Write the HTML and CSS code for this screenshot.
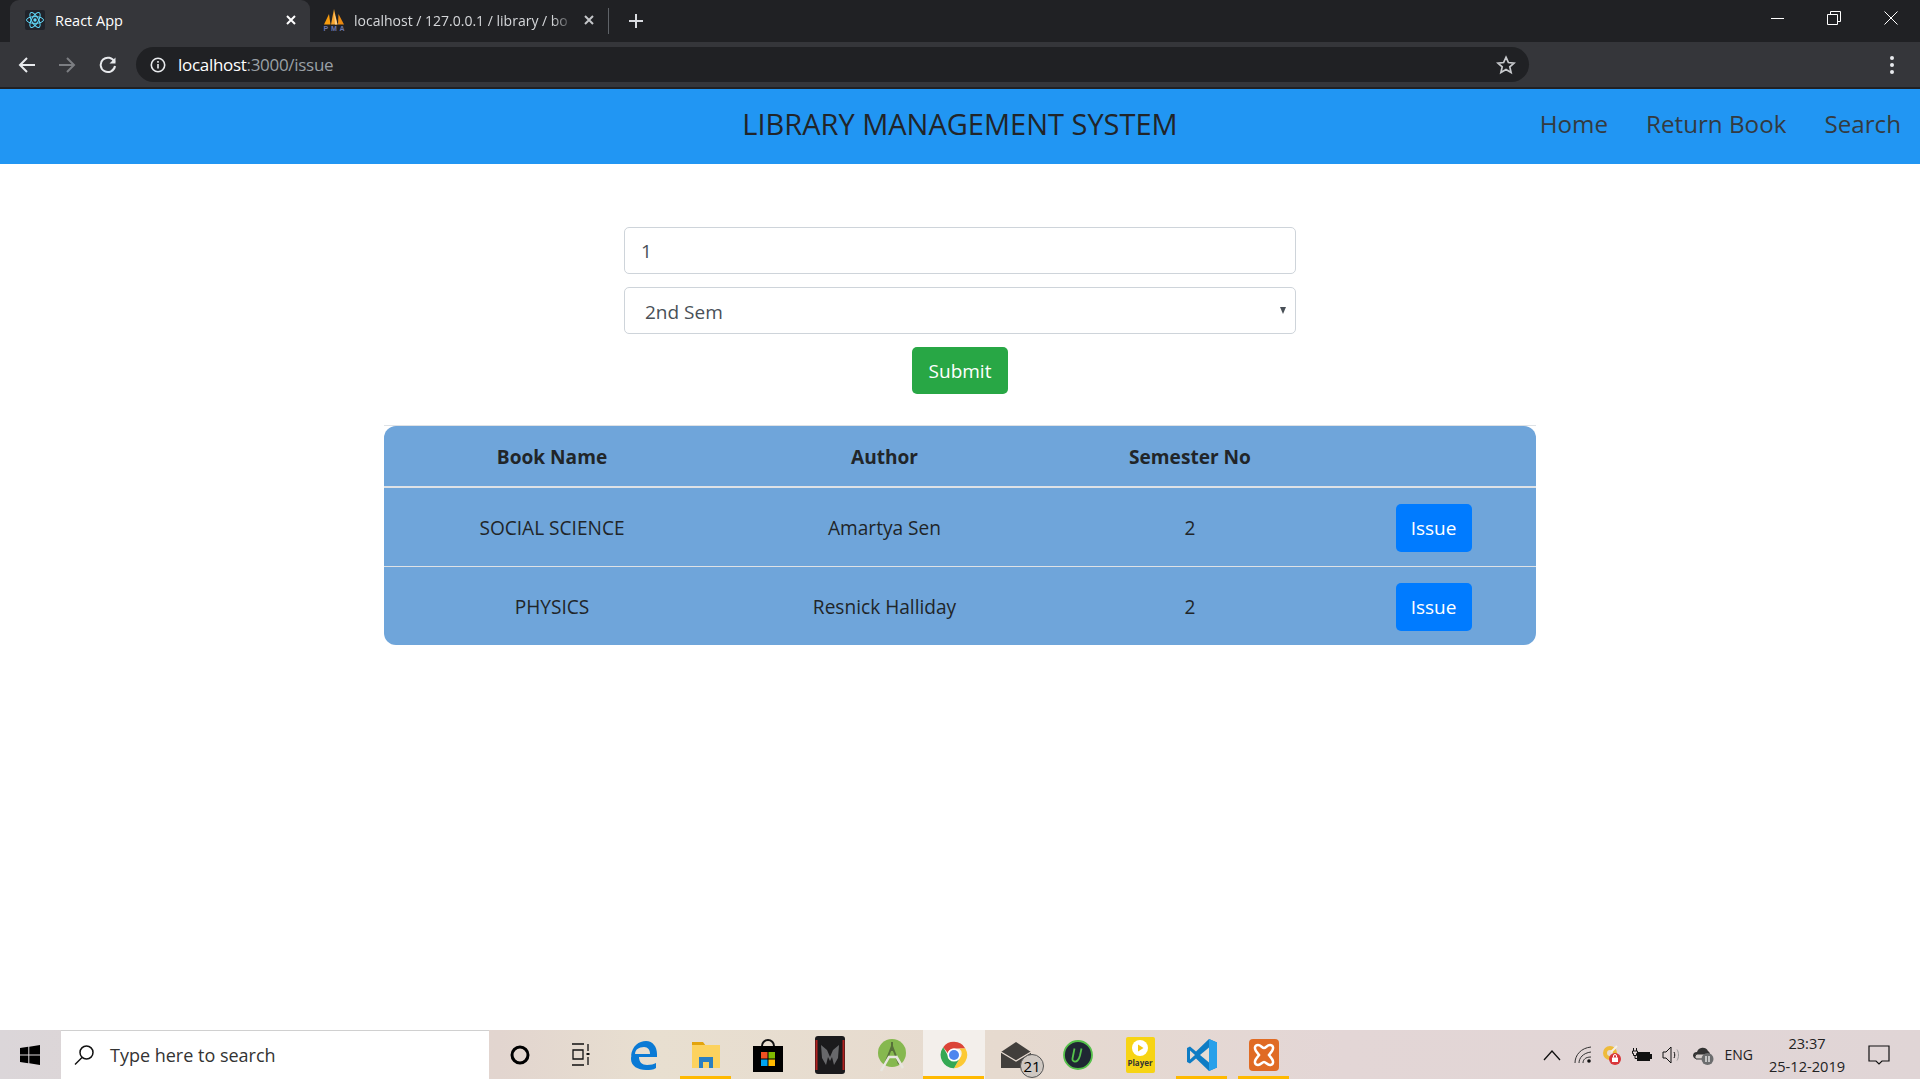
FILE: index.html
```html
<!DOCTYPE html>
<html lang="en">
<head>
  <meta charset="UTF-8">
  <title>React App</title>
  <link rel="stylesheet" href="styles.css">
</head>
<body>

  <!-- Browser chrome -->
  <div class="tabstrip">
    <div class="tab tab-active">
      <span class="favicon favicon-react">
        <svg width="20" height="20" viewBox="0 0 20 20" fill="none" stroke="#61dafb" stroke-width="1">
          <ellipse cx="10" cy="10" rx="8.5" ry="3.4"/>
          <ellipse cx="10" cy="10" rx="8.5" ry="3.4" transform="rotate(60 10 10)"/>
          <ellipse cx="10" cy="10" rx="8.5" ry="3.4" transform="rotate(120 10 10)"/>
          <circle cx="10" cy="10" r="1.7" fill="#61dafb" stroke="none"/>
        </svg>
      </span>
      <span class="tab-title">React App</span>
      <svg class="tab-close" width="12" height="12" viewBox="0 0 12 12" stroke="#fff" stroke-width="2"><path d="M2 2l8 8M10 2l-8 8"/></svg>
    </div>
    <div class="tab">
      <svg class="favicon" width="22" height="22" viewBox="0 0 22 22">
        <path d="M1 15.500L6 5l1.500 10.500z" fill="#f89c0e"/>
        <path d="M8 15.500L11 0l3.500 15.500z" fill="#f7a42c"/>
        <path d="M11 3l1 12.500h2.500z" fill="#fdd08a"/>
        <path d="M15 15.500L15.500 5l5.500 10.500z" fill="#ec8a10"/>
        <text x="11" y="21.800" font-size="7" font-weight="700" text-anchor="middle" textLength="21" fill="#6c78af" font-family="Liberation Sans, sans-serif">PMA</text>
      </svg>
      <span class="tab-title tab-title-fade">localhost / 127.0.0.1 / library / bo</span>
      <svg class="tab-close" width="12" height="12" viewBox="0 0 12 12" stroke="#c4c6c9" stroke-width="2"><path d="M2 2l8 8M10 2l-8 8"/></svg>
    </div>
    <span class="tab-sep"></span>
    <svg class="tab-new" width="16" height="16" viewBox="0 0 16 16" stroke="#dadce0" stroke-width="2"><path d="M8 1v14M1 8h14"/></svg>
    <div class="win-controls">
      <svg width="14" height="14" viewBox="0 0 14 14" stroke="#fff" stroke-width="1"><path d="M1 7.500h13"/></svg>
      <svg width="14" height="14" viewBox="0 0 14 14" fill="none" stroke="#fff" stroke-width="1"><path d="M.5 3.500h10v10H.5zM3.500 3.500V.5h10v10h-3"/></svg>
      <svg width="14" height="14" viewBox="0 0 14 14" stroke="#fff" stroke-width="1"><path d="M.5.5l13 13M13.500.5l-13 13"/></svg>
    </div>
  </div>

  <div class="toolbar">
    <svg class="tool-icon" width="18" height="18" viewBox="0 0 18 18" fill="none" stroke="#e8eaed" stroke-width="2"><path d="M17 9H3M9 2L2 9l7 7"/></svg>
    <svg class="tool-icon" width="18" height="18" viewBox="0 0 18 18" fill="none" stroke="#7c7e82" stroke-width="2"><path d="M1 9h14M9 2l7 7-7 7"/></svg>
    <svg class="tool-icon" width="18" height="18" viewBox="0 0 18 18" fill="none" stroke="#e8eaed" stroke-width="2"><path d="M15.500 6A7.200 7.200 0 1 0 16 10"/><path d="M16.500 1.500v6h-6" fill="#e8eaed" stroke="none"/></svg>
    <div class="omnibox">
      <svg width="16" height="16" viewBox="0 0 16 16" fill="none" stroke="#e8eaed" stroke-width="1.600"><circle cx="8" cy="8" r="6.700"/><path d="M8 7v4.500M8 4v1.800"/></svg>
      <span class="url"><span class="url-host">localhost</span>:3000/issue</span>
      <svg class="star" width="20" height="20" viewBox="0 0 20 20" fill="none" stroke="#c8cacd" stroke-width="1.700"><path d="M10 2.200l2.400 5.300 5.700.6-4.300 3.800 1.300 5.700-5.100-3-5.100 3 1.300-5.700-4.300-3.800 5.700-.6z"/></svg>
    </div>
    <svg class="menu-dots" width="6" height="20" viewBox="0 0 6 20" fill="#e8eaed"><circle cx="3" cy="3" r="2"/><circle cx="3" cy="10" r="2"/><circle cx="3" cy="17" r="2"/></svg>
  </div>

  <!-- Page -->
  <nav class="navbar">
    <span></span>
    <a class="brand">LIBRARY MANAGEMENT SYSTEM</a>
    <div class="nav-links">
      <a>Home</a>
      <a>Return Book</a>
      <a>Search</a>
    </div>
  </nav>

  <main class="content">
    <form class="issue-form">
      <input class="form-control" type="text" value="1">
      <div class="select-wrap">
        <select class="form-control form-select">
          <option>2nd Sem</option>
        </select>
      </div>
      <button class="btn btn-submit" type="button">Submit</button>
    </form>

    <div class="table-wrap">
      <div class="table-round">
        <table class="books">
          <colgroup>
            <col class="col-name"><col class="col-author"><col class="col-sem"><col class="col-action">
          </colgroup>
          <thead>
            <tr><th>Book Name</th><th>Author</th><th>Semester No</th><th></th></tr>
          </thead>
          <tbody>
            <tr>
              <td>SOCIAL SCIENCE</td><td>Amartya Sen</td><td>2</td>
              <td><button class="btn btn-issue" type="button">Issue</button></td>
            </tr>
            <tr>
              <td>PHYSICS</td><td>Resnick Halliday</td><td>2</td>
              <td><button class="btn btn-issue" type="button">Issue</button></td>
            </tr>
          </tbody>
        </table>
      </div>
    </div>
  </main>

  <!-- Windows taskbar -->
  <footer class="taskbar">
    <div class="start">
      <svg width="20" height="20" viewBox="0 0 20 20" fill="#000"><path d="M0 3l8.300-1.200v7.700H0zM9.300 1.700L20 0v9.500H9.300zM0 10.500h8.300v7.700L0 17zM9.300 10.500H20V20L9.300 18.300z"/></svg>
    </div>
    <div class="search-box">
      <svg width="22" height="22" viewBox="0 0 22 22" fill="none" stroke="#111" stroke-width="1.500"><circle cx="13.500" cy="8.500" r="6.500"/><path d="M9 13.500L2 20.500"/></svg>
      <span>Type here to search</span>
    </div>
    <div class="task-items">
      <div class="task-item"><svg width="22" height="22" viewBox="0 0 22 22" fill="none" stroke="#000" stroke-width="3"><circle cx="11" cy="11" r="8"/></svg></div>
      <div class="task-item"><svg width="22" height="24" viewBox="0 0 22 24" fill="none" stroke="#111" stroke-width="1.300"><path d="M1 1h12M2 7h10v9H2zM1 22h12M17 1v7M17 14v8"/><path d="M17 10v2" stroke-width="3"/></svg></div>
      <div class="task-item"><svg width="28" height="32" viewBox="0 0 28 32"><path d="M1 17C2 7 9 2 16 2c7 0 11 6 11 13v3H9c0 5 3 8 8 8 4 0 7-1 9-2v5c-3 2-6 2-10 2C8 31 1 27 1 20c0-4 2-8 7-11-2 2-3 4-3 6h15c0-4-2-7-6-7-5 0-9 3-13 9z" fill="#0a7ad5"/></svg></div>
      <div class="task-item has-run"><svg width="30" height="30" viewBox="0 0 30 30"><path d="M1 2h11l3 4H1z" fill="#e3a40d"/><path d="M1 5h28v23H1z" fill="#fcd25e"/><path d="M8 28v-11h14v11h-4v-6h-6v6z" fill="#2a7fc1"/></svg></div>
      <div class="task-item"><svg width="30" height="34" viewBox="0 0 30 34"><path d="M9 8a6 6 0 0 1 12 0v5" fill="none" stroke="#111" stroke-width="2"/><rect y="8" width="30" height="26" fill="#000"/><rect x="8" y="14" width="6.500" height="6.500" fill="#f25022"/><rect x="15.500" y="14" width="6.500" height="6.500" fill="#7fba00"/><rect x="8" y="21.500" width="6.500" height="6.500" fill="#00a4ef"/><rect x="15.500" y="21.500" width="6.500" height="6.500" fill="#ffb900"/></svg></div>
      <div class="task-item"><svg width="30" height="38" viewBox="0 0 30 38"><rect width="30" height="38" rx="3" fill="#1b1a1c"/><path d="M.5 4h2v30h-2zM27.500 4h2v30h-2z" fill="#b0201e"/><path d="M6 9l6 5 3 7 3-7 6-5-1 13-4 7-2-8-2 4-2-4-2 8-4-7z" fill="#68686b"/></svg></div>
      <div class="task-item"><svg width="30" height="34" viewBox="0 0 30 34"><circle cx="15" cy="15" r="14" fill="#86b84f"/><path d="M15 4v9M15 8l-7 18M15 8l7 18" stroke="#58713a" stroke-width="2" fill="none"/><path d="M4 33l8-14h7M26 30l-7-12" stroke="#e8e6df" stroke-width="2.500" fill="none"/></svg></div>
      <div class="task-item task-active has-run"><svg width="30" height="30" viewBox="0 0 48 48"><path d="M24 3a21 21 0 0 1 18.200 10.500H24a10.500 10.500 0 0 0-10 7.300L6.700 11.700A21 21 0 0 1 24 3z" fill="#db4437"/><path d="M42.200 13.500A21 21 0 0 1 24 45l9.100-15.700a10.500 10.500 0 0 0-.7-15.800z" fill="#fcc934"/><path d="M24 45A21 21 0 0 1 6.700 11.700L15.800 27.500a10.500 10.500 0 0 0 17.300 1.800z" fill="#34a853"/><circle cx="24" cy="24" r="10.500" fill="#fff"/><circle cx="24" cy="24" r="8" fill="#4e86ee"/></svg></div>
      <div class="task-item">
        <svg width="30" height="26" viewBox="0 0 30 26"><path d="M0 10L15 0l15 10v16H0z" fill="#423f3c"/><path d="M0 10l15 9 15-9" fill="none" stroke="#e8dcd2" stroke-width="1.200"/></svg>
        <span class="mail-badge">21</span>
      </div>
      <div class="task-item"><svg width="30" height="30" viewBox="0 0 30 30"><circle cx="15" cy="15" r="14" fill="#1f2733" stroke="#55c14a" stroke-width="1.800"/><path d="M11.500 8l-2 10c-.5 3 3 4 5 2 1.500-1.500 2-3 2.500-5l1.500-7" transform="translate(0 .5)" fill="none" stroke="#55c14a" stroke-width="1.800"/></svg></div>
      <div class="task-item">
        <div class="player-icon">
          <svg width="16" height="16" viewBox="0 0 16 16"><circle cx="8" cy="8" r="8" fill="#fff"/><path d="M6 4.500l5.500 3.500L6 11.500z" fill="#f4c80f"/></svg>
          <span>Player</span>
        </div>
      </div>
      <div class="task-item has-run"><svg width="30" height="34" viewBox="0 0 30 34"><path d="M22 1l8 3.500v25L22 33 9 20.500 3 25.500 0 24V10l3-1.500 6 5z" fill="#0e7cc4"/><path d="M22 1l8 3.500v25L22 33z" fill="#27a0ea"/><path d="M22 9.500l-9 7.500 9 7.500z" fill="#e6dcd4"/><path d="M3 12.500v9l5-4.500z" fill="#e6dcd4"/></svg></div>
      <div class="task-item has-run"><svg width="30" height="32" viewBox="0 0 30 32"><rect width="30" height="32" rx="4" fill="#e06b24"/><path d="M9 6c3 0 4 3 6 3s3-3 6-3 4 3 2 6l-3 4 3 4c2 3 1 6-2 6s-4-3-6-3-3 3-6 3-4-3-2-6l3-4-3-4C5 9 6 6 9 6z" fill="none" stroke="#fff" stroke-width="2.500"/></svg></div>
    </div>

    <div class="tray">
      <svg class="tray-icon tray-chevron" width="18" height="12" viewBox="0 0 18 12" fill="none" stroke="#111" stroke-width="1.300"><path d="M1 11l8-9 8 9"/></svg>
      <svg class="tray-icon" width="18" height="18" viewBox="0 0 18 18" fill="none" stroke="#333" stroke-width="1"><path d="M1 17C1 9 7 2 17 1M5 17c0-5 4-10 12-11M9 17c0-3 2-6 8-6"/><circle cx="15" cy="15" r="1.800" fill="#111" stroke="none"/></svg>
      <svg class="tray-icon" width="20" height="20" viewBox="0 0 20 20"><circle cx="8" cy="8" r="7" fill="#eebb3a"/><circle cx="8" cy="8" r="3" fill="#e6dcd4"/><path d="M9 7L15 1" stroke="#f4f0e6" stroke-width="2"/><circle cx="13" cy="14" r="6" fill="#d9363a"/><rect x="10" y="12.500" width="6" height="4.500" fill="#fff"/><path d="M11.500 12.500v-1.500a1.500 1.500 0 0 1 3 0v1.500" fill="none" stroke="#fff"/></svg>
      <svg class="tray-icon" width="20" height="16" viewBox="0 0 20 16"><path d="M1.500 1v3M4.500 1v3" stroke="#111"/><path d="M.5 4h5v2.500H4.500v2h-3v-2H.5z" fill="none" stroke="#111"/><path d="M3 8.500v3h2" stroke="#111" fill="none"/><rect x="5" y="5" width="13" height="9" fill="#111"/><rect x="18" y="7" width="2" height="5" fill="#111"/></svg>
      <svg class="tray-icon" width="20" height="18" viewBox="0 0 20 18" fill="none" stroke="#111" stroke-width="1"><path d="M1 6h3l5-5v16l-5-5H1z"/><path d="M12 6c1 2 1 4 0 6"/><path d="M15 3.500c2 3 2 8 0 11" stroke="#999"/></svg>
      <svg class="tray-icon" width="22" height="20" viewBox="0 0 22 20"><path d="M1 11a4 4 0 0 1 4-4 6 6 0 0 1 11-1 4 4 0 0 1 2 3H5a3 3 0 0 0-1 5 4 4 0 0 1-3-3z" fill="#333"/><path d="M4 14a3 3 0 0 1 1-5h11v5z" fill="#d4cdcb" stroke="#333"/><circle cx="15.500" cy="14" r="6" fill="#6c6d6e"/><path d="M14 11v6M17 11v6" stroke="#fff" stroke-width="1.200"/></svg>
      <span class="tray-lang">ENG</span>
      <div class="clock"><span>23:37</span><span>25-12-2019</span></div>
      <svg class="notify" width="22" height="20" viewBox="0 0 22 20" fill="none" stroke="#111" stroke-width="1.200"><path d="M1 1h20v15h-7l-3 3-3-3H1z"/></svg>
    </div>
  </footer>

</body>
</html>
```

FILE: styles.css
```css
* {
  box-sizing: border-box;
}

html, body {
  margin: 0;
  height: 100%;
}

body {
  font-family: "Open Sans", "Noto Sans", sans-serif;
  color: #212529;
  background: #fff;
  display: flex;
  flex-direction: column;
  height: 1079px;
  overflow: hidden;
}

/* Browser tabs */
.tabstrip {
  height: 42px;
  flex: none;
  display: flex;
  align-items: center;
  padding-left: 10px;
  background: #202124;
  color: #e8eaed;
  font-size: 14.5px;
}

.tab {
  width: 300px;
  height: 42px;
  padding: 0 13px 2px 15px;
  display: flex;
  align-items: center;
  gap: 10px;
  color: #d5d7da;
}

.tab-active {
  background: #35363a;
  color: #fff;
  border-radius: 9px 9px 0 0;
}

.tab + .tab {
  width: 296px;
  margin-left: 2px;
  padding: 0 13px 2px 11px;
  gap: 9px;
  font-size: 14px;
}

.favicon {
  flex: none;
}

.favicon-react {
  width: 20px;
  height: 20px;
  background: #20232a;
  border-radius: 2px;
}

.favicon-react svg {
  display: block;
}

.tab-title {
  flex: 1;
  white-space: nowrap;
  overflow: hidden;
}

.tab-title-fade {
  -webkit-mask-image: linear-gradient(to right, #000 90%, transparent);
  mask-image: linear-gradient(to right, #000 90%, transparent);
}

.tab-close {
  flex: none;
}

.tab-sep {
  width: 1px;
  height: 26px;
  background: #5f6368;
}

.tab-new {
  margin-left: 19px;
}

.win-controls {
  margin-left: auto;
  display: flex;
  gap: 43px;
  padding-right: 22px;
  margin-top: -6px;
}

/* Address bar */
.toolbar {
  height: 47px;
  flex: none;
  display: flex;
  align-items: center;
  padding: 0 25px 0 18px;
  background: #35363a;
  border-bottom: 2px solid #202124;
}

.tool-icon {
  margin-right: 22px;
}

.tool-icon:nth-child(2) {
  margin-right: 23px;
}

.tool-icon:nth-child(3) {
  margin-right: 19px;
}

.omnibox {
  width: 1393px;
  height: 35px;
  padding: 0 13px 0 14px;
  display: flex;
  align-items: center;
  gap: 12px;
  background: #202124;
  border-radius: 18px;
  color: #9aa0a6;
  font-size: 17px;
}

.url {
  flex: 1;
  letter-spacing: -0.3px;
}

.url-host {
  color: #fff;
}

.menu-dots {
  margin-left: auto;
}

/* Navbar */
.navbar {
  height: 75px;
  flex: none;
  display: grid;
  grid-template-columns: 1fr auto 1fr;
  align-items: center;
  padding: 0 19px 7px;
  background: #2196f3;
}

.brand {
  font-size: 29px;
  color: #212529;
}

.nav-links {
  display: flex;
  justify-content: flex-end;
  gap: 38px;
  font-size: 24.2px;
  color: #343a40;
}

/* Form */
.content {
  flex: 1;
  padding-top: 63px;
}

.issue-form {
  width: 672px;
  margin: 0 auto 31px;
  display: flex;
  flex-direction: column;
  align-items: center;
}

.form-control {
  width: 100%;
  height: 47px;
  padding: 1px 16px 0;
  font-family: inherit;
  font-size: 19px;
  color: #495057;
  background: #fff;
  border: 1px solid #ced4da;
  border-radius: 5px;
  outline: none;
}

.select-wrap {
  width: 100%;
  margin-top: 13px;
  position: relative;
}

.select-wrap::after {
  content: "";
  position: absolute;
  right: 10px;
  top: 20px;
  border-left: 3.500px solid transparent;
  border-right: 3.500px solid transparent;
  border-top: 7px solid #495057;
}

.form-select {
  display: block;
  padding-top: 3px;
  padding-left: 20px;
  appearance: none;
  -webkit-appearance: none;
}

.btn {
  font-family: inherit;
  font-size: 19px;
  color: #fff;
  border: none;
  border-radius: 5px;
  cursor: pointer;
}

.btn-submit {
  width: 96px;
  height: 47px;
  margin-top: 13px;
  background: #28a745;
}

/* Table */
.table-wrap {
  width: 1152px;
  margin: 0 auto;
  border-top: 1px solid #dee2e6;
}

.table-round {
  border-radius: 12px;
  overflow: hidden;
  background: #6fa5da;
}

.books {
  width: 100%;
  table-layout: fixed;
  border-collapse: collapse;
  font-size: 19.1px;
  text-align: center;
}

.col-name { width: 336px; }
.col-author { width: 329px; }
.col-sem { width: 282px; }

.books th {
  height: 61px;
  padding-top: 2px;
  font-weight: 700;
  border-bottom: 2px solid #dee2e6;
}

.books td {
  height: 79px;
  padding: 2px 0 0;
  border-bottom: 1px solid #dee2e6;
}

.books tbody tr:last-child td {
  height: 79px;
  border-bottom: none;
}

.btn-issue {
  width: 76px;
  height: 48px;
  background: #007bff;
  display: block;
  margin: 0 auto;
}

/* Taskbar */
.taskbar {
  height: 49px;
  flex: none;
  display: flex;
  background: linear-gradient(to right, #dbd6d9 0%, #e2d5cf 26%, #e8dfd0 34%, #e6dacf 52%, #e3d6d6 70%, #e0d5d6 100%);
}

.start {
  width: 61px;
  display: flex;
  align-items: center;
  justify-content: center;
  padding-right: 1px;
}

.search-box {
  width: 428px;
  display: flex;
  align-items: center;
  gap: 15px;
  padding-left: 12px;
  background: #fff;
  border-top: 1px solid #d0d0d0;
  font-size: 18px;
  color: #333;
}

.task-items {
  display: flex;
}

.task-item {
  width: 62px;
  display: flex;
  align-items: center;
  justify-content: center;
  position: relative;
}

.has-run::after {
  content: "";
  position: absolute;
  left: 5px;
  right: 6px;
  bottom: 0;
  height: 3px;
  background: #ffb900;
}

.task-active {
  background: #f3efeb;
}

.task-active::after {
  left: 0;
  right: 1px;
}

.mail-badge {
  position: absolute;
  left: 35px;
  top: 24px;
  width: 24px;
  height: 24px;
  border-radius: 50%;
  border: 1px solid #555;
  background: #cfc8c2;
  color: #000;
  font-size: 15px;
  line-height: 22px;
  text-align: center;
}

.player-icon {
  width: 29px;
  height: 36px;
  padding-top: 3px;
  display: flex;
  flex-direction: column;
  align-items: center;
  background: #f7d414;
  border-radius: 2px;
  color: #333;
  font-size: 8px;
  font-weight: 700;
  line-height: 14px;
}

.tray {
  margin-left: auto;
  display: flex;
  align-items: center;
  padding-right: 30px;
  color: #222;
}

.tray-icon {
  margin-right: 10px;
}

.tray-chevron {
  margin-right: 13px;
}

.tray-lang {
  margin-left: 1px;
  font-size: 14px;
}

.clock {
  width: 96px;
  margin: 0 13px 0 6px;
  display: flex;
  flex-direction: column;
  align-items: center;
  font-size: 14.6px;
  line-height: 23px;
}

.notify {
  flex: none;
}
```
